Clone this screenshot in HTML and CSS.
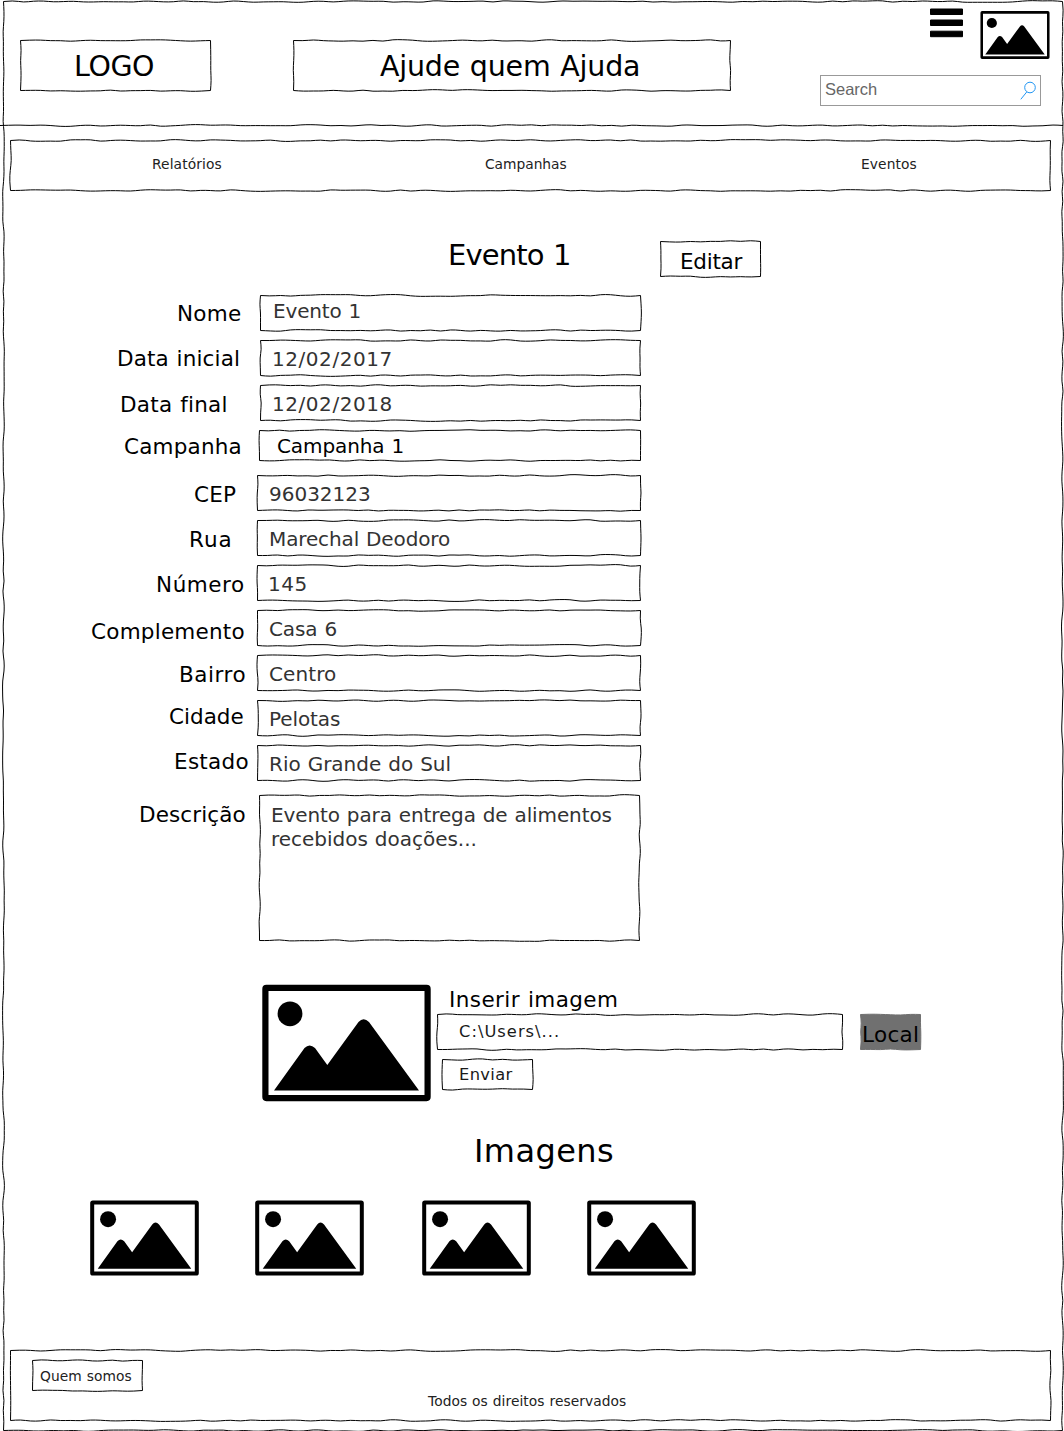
FILE: index.html
```html
<!DOCTYPE html>
<html lang="pt-BR">
<head>
<meta charset="utf-8">
<title>Ajude quem Ajuda</title>
<link rel="stylesheet" href="styles.css">
</head>
<body>
<svg class="defs" aria-hidden="true">
  <symbol id="picture" viewBox="0 0 169 117">
    <rect x="3.4" y="3.4" width="162.2" height="110.2" rx="1" fill="#fff" stroke="#000" stroke-width="6.2" stroke-linejoin="round"/>
    <circle cx="28" cy="29.3" r="12.4"/>
    <path d="M12 106 L42.500 63.500 Q47.500 58.500 53 63.500 L65.300 80.500 L96.500 37.500 Q101.500 31.800 107 37.500 L157 106 Z"/>
  </symbol>
</svg>
<div class="page sketch">
  <header class="header">
    <div class="logo sketch"><span class="t xl" data-w="77">LOGO</span></div>
    <div class="title sketch"><span class="t xl" data-w="258">Ajude quem Ajuda</span></div>
    <div class="tools">
      <div class="tool-icons">
        <svg class="menu" viewBox="0 0 33 30"><path d="M0.500 1h32v5.500h-32zM0.500 12h32v5.500h-32zM0.500 23.200h32v5.500h-32z" stroke="#000" stroke-linejoin="round"/></svg>
        <svg class="avatar"><use href="#picture"/></svg>
      </div>
      <div class="search"><span class="t" data-w="52">Search</span>
        <svg class="lens" viewBox="0 0 16 20"><circle cx="10" cy="6.500" r="5.300"/><path d="M6.700 11 L0.800 18.300"/></svg>
      </div>
    </div>
  </header>
  <div class="divider"></div>
  <nav class="nav sketch">
    <a class="t sm" data-w="68.500">Relatórios</a>
    <a class="t sm" data-w="81.500">Campanhas</a>
    <a class="t sm" data-w="54.500">Eventos</a>
  </nav>
  <main>
    <div class="heading">
      <h1 class="t h1" data-w="119">Evento 1</h1>
      <div class="edit sketch"><span class="t lb" data-w="60.500">Editar</span></div>
    </div>
    <form class="form">
      <div class="row"><label class="nome"><span class="t lb" data-w="62">Nome</span></label><div class="field high sketch"><span class="t" data-w="85.500">Evento 1</span></div></div>
      <div class="row"><label class="inicial"><span class="t lb" data-w="119">Data inicial</span></label><div class="field sketch"><span class="t" data-w="117.500">12/02/2017</span></div></div>
      <div class="row"><label class="final"><span class="t lb" data-w="103.500">Data final</span></label><div class="field sketch"><span class="t" data-w="117.500">12/02/2018</span></div></div>
      <div class="row"><label class="campanha"><span class="t lb" data-w="115.500">Campanha</span></label><div class="field select sketch"><span class="t" data-w="124.500">Campanha 1</span></div></div>
      <div class="row"><label class="cep"><span class="t lb" data-w="41">CEP</span></label><div class="field wide sketch"><span class="t" data-w="100">96032123</span></div></div>
      <div class="row"><label class="rua"><span class="t lb" data-w="39.500">Rua</span></label><div class="field wide sketch"><span class="t" data-w="180">Marechal Deodoro</span></div></div>
      <div class="row"><label class="numero"><span class="t lb" data-w="85">Número</span></label><div class="field wide sketch"><span class="t" data-w="35.500">145</span></div></div>
      <div class="row"><label class="complemento"><span class="t lb" data-w="151.500">Complemento</span></label><div class="field wide sketch"><span class="t" data-w="66.500">Casa 6</span></div></div>
      <div class="row"><label class="bairro"><span class="t lb" data-w="63.500">Bairro</span></label><div class="field wide sketch"><span class="t" data-w="66">Centro</span></div></div>
      <div class="row"><label class="cidade"><span class="t lb" data-w="73.500">Cidade</span></label><div class="field wide sketch"><span class="t" data-w="70">Pelotas</span></div></div>
      <div class="row"><label class="estado"><span class="t lb" data-w="71.500">Estado</span></label><div class="field wide sketch"><span class="t" data-w="179.500">Rio Grande do Sul</span></div></div>
      <div class="row last"><label class="descricao"><span class="t lb" data-w="103.500">Descrição</span></label><div class="field area sketch"><span class="t" data-w="339.500">Evento para entrega de alimentos</span><span class="t" data-w="203.500">recebidos doações...</span></div></div>
    </form>
    <section class="upload">
      <svg class="preview"><use href="#picture"/></svg>
      <div class="upload-form">
        <span class="t lb insert" data-w="166">Inserir imagem</span>
        <div class="file-row">
          <div class="file sketch"><span class="t md" data-w="99">C:\Users\...</span></div>
          <div class="local sketch"><span class="t lb" data-w="53">Local</span></div>
        </div>
        <div class="send sketch"><span class="t md" data-w="52.500">Enviar</span></div>
      </div>
    </section>
    <h2 class="t h2" data-w="136">Imagens</h2>
    <section class="gallery">
      <svg><use href="#picture"/></svg>
      <svg><use href="#picture"/></svg>
      <svg><use href="#picture"/></svg>
      <svg><use href="#picture"/></svg>
    </section>
  </main>
  <footer class="footer sketch">
    <div class="about sketch"><span class="t sm" data-w="91.500">Quem somos</span></div>
    <span class="t sm rights" data-w="199">Todos os direitos reservados</span>
  </footer>
</div>
<script src="sketch.js"></script>
</body>
</html>
```
FILE: styles.css
```css
* { box-sizing: border-box; }
body {
  margin: 0;
  background: #fff;
  color: #000;
  font: 20px/24px "DejaVu Sans", sans-serif;
  overflow: hidden;
}
h1, h2 { margin: 0; font-weight: 400; }
svg { display: block; }
.defs { position: absolute; width: 0; height: 0; }
.t { display: block; width: max-content; white-space: pre; }
.xl { font-size: 28.5px; line-height: 34px; }
.h1 { font-size: 29px; line-height: 34px; }
.h2 { font-size: 32px; line-height: 38px; }
.lb { font-size: 21.5px; line-height: 25px; color: #000; }
.md { font-size: 16.3px; line-height: 20px; color: #1a1a1a; }
.sm { font-size: 13.8px; line-height: 18px; color: #222; }

/* hand-drawn outlines */
.sketch { position: relative; }
.outline {
  position: absolute;
  inset: 0;
  width: 100%;
  height: 100%;
  overflow: visible;
  pointer-events: none;
  fill: none;
  stroke: #000;
  stroke-width: 1;
}

.page { width: 1060px; height: 1430px; margin: 1px 0 0 3px; }

.header { display: flex; height: 124px; }
.logo { width: 191px; height: 51px; margin: 39px 0 0 17px; padding: 10px 0 0 56px; }
.title { width: 438px; height: 51px; margin: 39px 0 0 82px; padding: 10px 0 0 87px; }
.tools { margin-left: 89px; padding-top: 7px; width: 230px; }
.tool-icons { display: flex; justify-content: flex-end; gap: 17px; }
.menu { width: 33px; height: 30px; }
.avatar { width: 70px; height: 48px; margin-top: 3px; }
.search {
  display: flex;
  justify-content: space-between;
  width: 221px;
  height: 31px;
  margin-top: 16px;
  padding: 1px 4px 0 4px;
  border: 1px solid #999;
  font: 16.5px/24px "Liberation Sans", sans-serif;
  color: #666;
}
.lens { width: 16px; height: 20px; margin-top: 4px; fill: none; stroke: #2196f3; stroke-width: 1; }

.divider { position: relative; width: 1063px; height: 1px; margin-left: -3px; }

.nav { width: 1041px; height: 51px; margin: 14px 0 0 7px; padding: 15px 0 0 143px; display: flex; }
.nav a { flex: none; width: 332px; }
.nav a:nth-of-type(2) { width: 377px; }
.nav a:nth-of-type(3) { width: 70px; }

.heading { display: flex; height: 104px; padding: 50px 0 0 447px; }
.heading .h1 { width: 210px; margin-top: -3px; }
.edit { width: 101px; height: 36px; padding: 8px 0 0 22px; }

.row { display: flex; height: 45px; }
label { width: 257px; flex: none; }
.nome { padding: 6px 0 0 176px; }
.inicial { padding: 6px 0 0 116px; }
.final { padding: 7px 0 0 119px; }
.campanha { padding: 4px 0 0 122px; }
.cep { padding: 7px 0 0 192px; }
.rua { padding: 7px 0 0 188px; }
.numero { padding: 7px 0 0 155px; }
.complemento { padding: 9px 0 0 89px; }
.bairro { padding: 7px 0 0 178px; }
.cidade { padding: 4px 0 0 167px; }
.estado { padding: 4px 0 0 173px; }
.descricao { padding: 7px 0 0 138px; }
.field { width: 381px; height: 36px; padding: 7px 0 0 14px; color: #333; }
.high { padding: 4px 0 0 14px; }
.select { height: 31px; width: 382px; margin-left: -1px; padding: 4px 0 0 19px; color: #000; }
.wide { width: 384px; margin-left: -3px; padding-left: 13px; }
.area { width: 381px; height: 146px; margin-left: -1px; padding: 8px 0 0 13px; }
.last { height: 146px; margin-top: 5px; }

.upload { display: flex; height: 118px; margin: 43px 0 0 259px; }
.preview { width: 169px; height: 118px; }
.upload-form { margin-left: 6px; padding-top: 3px; }
.insert { margin-left: 14px; }
.file-row { display: flex; gap: 17px; margin-top: 2px; }
.file { width: 406px; height: 36px; padding: 8px 0 0 22px; }
.local { width: 61px; height: 36px; padding: 8px 0 0 4px; }
.local .t { position: relative; }
.local .outline { fill: #707070; stroke: #707070; }
.send { width: 91px; height: 31px; margin: 9px 0 0 5px; padding: 6px 0 0 18px; }

.h2 { margin: 30px 0 0 474px; }
.gallery { display: flex; gap: 57px; margin: 30px 0 0 86.5px; }
.gallery svg { width: 109px; height: 76px; }
.gallery svg:nth-child(2) { margin-left: -1px; }
.gallery svg:nth-child(3) { margin-left: 1px; }
.gallery svg:nth-child(4) { margin-left: -1px; }

.footer { width: 1041px; height: 71px; margin: 74px 0 0 7px; padding: 10px 0 0 22px; }
.about { width: 111px; height: 31px; padding: 7px 0 0 8px; }
.rights { margin: 1px 0 0 395px; }
```
FILE: sketch.js
```js
// Draws wavering outlines and spaces each text run to its set width.
let seed = 7;
const rand = () => (seed = (seed * 16807) % 2147483647) / 2147483647;
const NS = 'http://www.w3.org/2000/svg';

function edge(x1, y1, x2, y2) {
  const len = Math.hypot(x2 - x1, y2 - y1);
  const n = Math.max(1, Math.round(len / 10));
  const ux = (x2 - x1) / len, uy = (y2 - y1) / len;
  const pts = [];
  for (let i = 0; i <= n; i++) {
    const j = i === 0 || i === n ? 0 : (rand() - 0.5) * 2;
    const d = (len * i) / n;
    pts.push([x1 + ux * d - uy * j, y1 + uy * d + ux * j]);
  }
  let s = '';
  for (let i = 1; i < pts.length; i++) {
    const [x, y] = pts[i];
    if (i === pts.length - 1) s += ` L${x.toFixed(2)} ${y.toFixed(2)}`;
    else {
      const [a, b] = pts[i + 1];
      s += ` Q${x.toFixed(2)} ${y.toFixed(2)} ${((x + a) / 2).toFixed(2)} ${((y + b) / 2).toFixed(2)}`;
    }
  }
  return s;
}

function outline(el, d) {
  const svg = document.createElementNS(NS, 'svg');
  svg.setAttribute('class', 'outline');
  const path = document.createElementNS(NS, 'path');
  path.setAttribute('d', d);
  svg.appendChild(path);
  el.prepend(svg);
}

document.querySelectorAll('.sketch').forEach(el => {
  const r = el.offsetWidth - 0.5, b = el.offsetHeight - 0.5, o = 0.5;
  outline(el, `M${o} ${o}` + edge(o, o, r, o) + edge(r, o, r, b) + edge(r, b, o, b) + edge(o, b, o, o) + 'Z');
});
document.querySelectorAll('.divider').forEach(el =>
  outline(el, 'M0 0.5' + edge(0, 0.5, el.offsetWidth, 0.5)));

const ctx = document.createElement('canvas').getContext('2d');
document.querySelectorAll('[data-w]').forEach(el => {
  const cs = getComputedStyle(el);
  const text = el.textContent;
  ctx.font = `${cs.fontSize} ${cs.fontFamily}`;
  const m = ctx.measureText(text);
  const word = parseFloat(cs.fontSize) * 0.035;
  const ink = m.actualBoundingBoxLeft + m.actualBoundingBoxRight + word * (text.split(' ').length - 1);
  el.style.wordSpacing = word + 'px';
  el.style.letterSpacing = (el.dataset.w - ink) / (text.length - 1) + 'px';
  el.style.textIndent = m.actualBoundingBoxLeft + 'px';
});
```
